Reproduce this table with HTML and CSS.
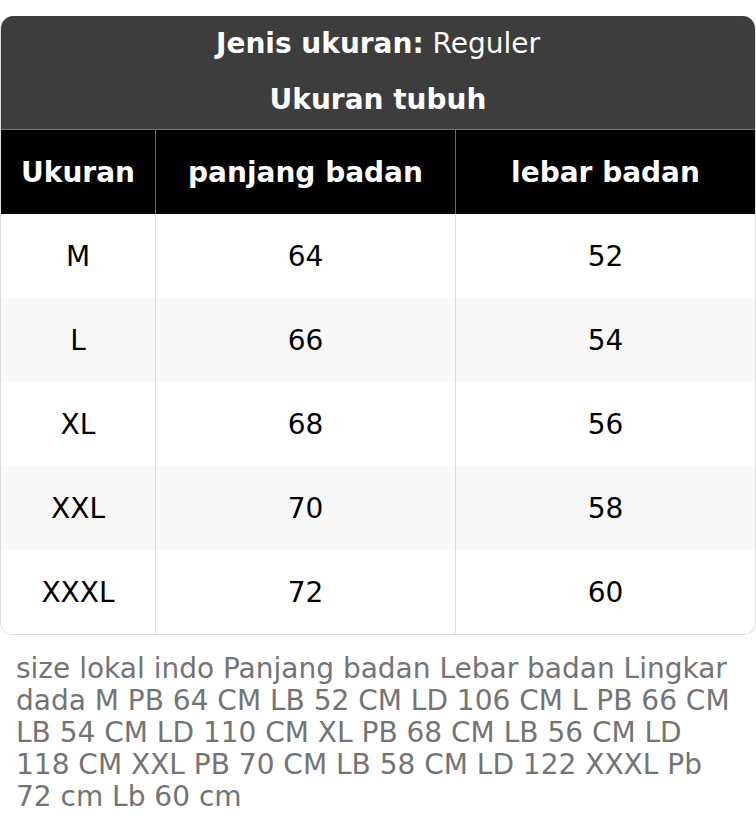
FILE: index.html
```html
<!DOCTYPE html>
<html>
<head>
<meta charset="utf-8">
<link rel="stylesheet" href="styles.css">
</head>
<body>
<div class="page">
  <div class="card">
    <div class="title">
      <div class="title-line"><b>Jenis ukuran:</b> Reguler</div>
      <div class="title-line"><b>Ukuran tubuh</b></div>
    </div>
    <div class="grid">
      <div class="cell head first">Ukuran</div>
      <div class="cell head">panjang badan</div>
      <div class="cell head">lebar badan</div>

      <div class="cell first">M</div>
      <div class="cell">64</div>
      <div class="cell">52</div>

      <div class="cell first alt">L</div>
      <div class="cell alt">66</div>
      <div class="cell alt">54</div>

      <div class="cell first">XL</div>
      <div class="cell">68</div>
      <div class="cell">56</div>

      <div class="cell first alt">XXL</div>
      <div class="cell alt">70</div>
      <div class="cell alt">58</div>

      <div class="cell first">XXXL</div>
      <div class="cell">72</div>
      <div class="cell">60</div>
    </div>
  </div>
  <p class="note">size lokal indo Panjang badan Lebar badan Lingkar dada M PB 64 CM LB 52 CM LD 106 CM L PB 66 CM LB 54 CM LD 110 CM XL PB 68 CM LB 56 CM LD 118 CM XXL PB 70 CM LB 58 CM LD 122 XXXL Pb 72 cm Lb 60 cm</p>
</div>
</body>
</html>
```

FILE: styles.css
```css
html, body {
  margin: 0;
  padding: 0;
  background: #ffffff;
}

.page {
  padding-top: 16px;
  font-family: "DejaVu Sans", sans-serif;
}

.card {
  border: 1px solid #dddddd;
  border-top: none;
  border-radius: 13px;
  overflow: hidden;
}

.title {
  background: #3d3d3d;
  color: #ffffff;
  border-bottom: 1px solid #777777;
  font-size: 28px;
  text-align: center;
}

.title-line {
  height: 56px;
  line-height: 56px;
}

.title-line:last-child {
  height: 57px;
}

.grid {
  display: grid;
  grid-template-columns: 154px 300px 1fr;
}

.cell {
  height: 84px;
  display: flex;
  align-items: center;
  justify-content: center;
  font-size: 28px;
  color: #000000;
  background: #ffffff;
  border-left: 1px solid #dddddd;
}

.cell.first {
  border-left: none;
}

.cell.alt {
  background: #f8f8f8;
}

.cell.head {
  background: #000000;
  color: #ffffff;
  font-weight: bold;
  border-left-color: #6a6a6a;
}

.note {
  margin: 18px 0 0;
  padding: 0 16px;
  font-size: 28px;
  line-height: 32px;
  color: #747474;
}
```
